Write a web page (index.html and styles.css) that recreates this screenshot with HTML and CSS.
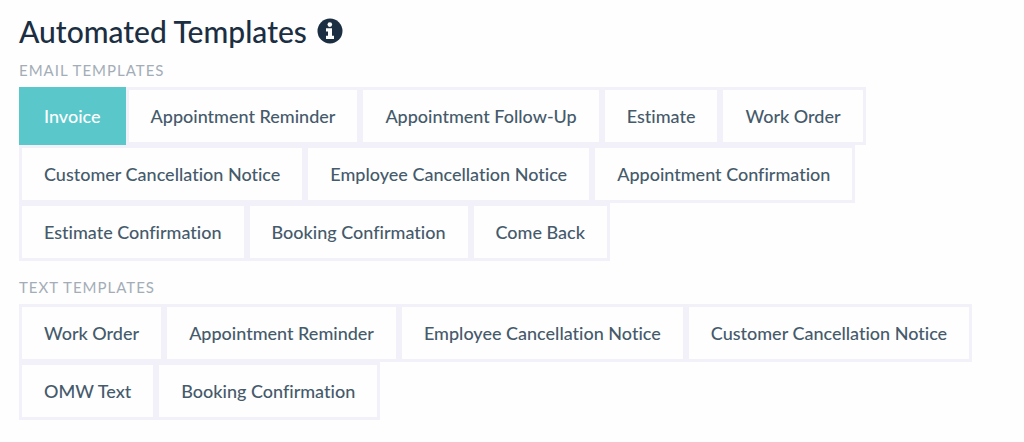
FILE: index.html
```html
<!DOCTYPE html>
<html lang="en">
<head>
<meta charset="utf-8">
<meta name="viewport" content="width=device-width, initial-scale=1">
<title>Automated Templates</title>
<link rel="stylesheet" href="styles.css">
</head>
<body>
<main class="page">
  <h1 class="title">Automated Templates
    <svg class="info" viewBox="0 0 26 26" role="img" aria-label="Information">
      <circle class="info-disc" cx="13" cy="13" r="12.5"/>
      <circle class="info-mark" cx="12.8" cy="6.6" r="2.3"/>
      <path class="info-mark" d="M9 10.3h6v7.4h2v3.2H9v-3.2h2v-4.2H9z"/>
    </svg>
  </h1>
  <section class="group" aria-labelledby="email-heading">
    <h2 class="heading" id="email-heading">EMAIL TEMPLATES</h2>
    <div class="buttons">
      <button class="template active" type="button" aria-pressed="true">Invoice</button>
      <button class="template" type="button">Appointment Reminder</button>
      <button class="template" type="button">Appointment Follow-Up</button>
      <button class="template" type="button">Estimate</button>
      <button class="template" type="button">Work Order</button>
      <button class="template" type="button">Customer Cancellation Notice</button>
      <button class="template" type="button">Employee Cancellation Notice</button>
      <button class="template" type="button">Appointment Confirmation</button>
      <button class="template" type="button">Estimate Confirmation</button>
      <button class="template" type="button">Booking Confirmation</button>
      <button class="template" type="button">Come Back</button>
    </div>
  </section>
  <section class="group" aria-labelledby="text-heading">
    <h2 class="heading" id="text-heading">TEXT TEMPLATES</h2>
    <div class="buttons">
      <button class="template" type="button">Work Order</button>
      <button class="template" type="button">Appointment Reminder</button>
      <button class="template" type="button">Employee Cancellation Notice</button>
      <button class="template" type="button">Customer Cancellation Notice</button>
      <button class="template" type="button">OMW Text</button>
      <button class="template" type="button">Booking Confirmation</button>
    </div>
  </section>
</main>
</body>
</html>
```
FILE: styles.css
```css
body {
  margin: 0;
  background: #fefefe;
  color: #1b2e42;
  font-family: Lato, "Liberation Sans", sans-serif;
  font-variant-ligatures: none;
}

.page {
  padding: 11px 19px 0;
}

.title {
  display: flex;
  align-items: center;
  gap: 10px;
  margin: 0;
  font-size: 30px;
  font-weight: 500;
  line-height: 40px;
}

.info {
  width: 26px;
  height: 26px;
}

.info-disc {
  fill: #1b2e42;
}

.info-mark {
  fill: #fefefe;
}

.group {
  padding-bottom: 17px;
}

.heading {
  margin: 0;
  padding: 10px 0 8px;
  color: #a3adb7;
  font-size: 15px;
  font-weight: 400;
  letter-spacing: 1px;
  line-height: 18px;
}

.group + .group .heading {
  padding-top: 0;
}

.buttons {
  display: flex;
  flex-wrap: wrap;
}

.template {
  padding: 14px 22px;
  border: 3px solid #f2f0f8;
  border-radius: 0;
  background: #fefefe;
  color: #455a6b;
  font-family: inherit;
  font-size: 18px;
  font-weight: 500;
  font-variant-ligatures: none;
  line-height: 24px;
  cursor: pointer;
}

.template.active {
  border-color: #5ac8ca;
  background: #5ac8ca;
  color: #fefefe;
}
```
